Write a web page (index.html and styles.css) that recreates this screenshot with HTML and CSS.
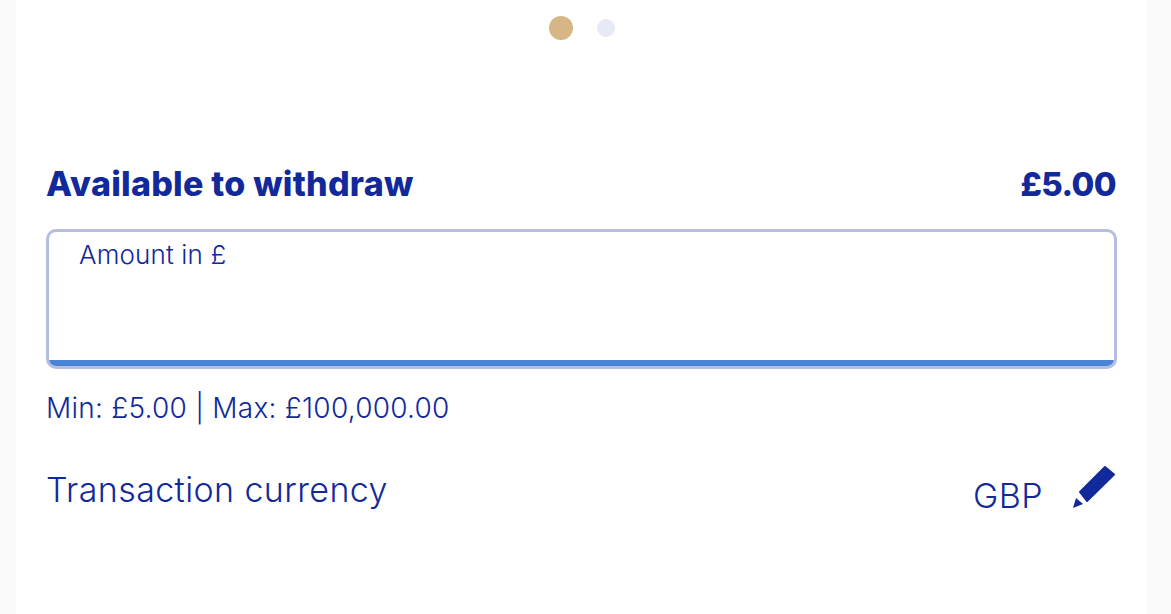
FILE: index.html
```html
<!DOCTYPE html>
<html>
<head>
  <link rel="stylesheet" href="styles.css">
</head>
<body>
  <div class="panel">
    <div class="dots">
      <span class="dot dot-active"></span>
      <span class="dot"></span>
    </div>

    <div class="available">
      <span>Available to withdraw</span>
      <span class="available-sum">£5.00</span>
    </div>

    <div class="amount-box">
      <label class="amount-label">Amount in £</label>
      <div class="amount-bar"></div>
    </div>

    <p class="limits">Min: £5.00 | Max: £100,000.00</p>

    <div class="currency">
      <span class="currency-title">Transaction currency</span>
      <div class="currency-value">
        <span class="currency-code">GBP</span>
        <svg class="edit-icon" width="44" height="44" viewBox="0 0 44 44">
          <polygon class="edit-body" points="33,2 42,9.500 15,36 8,27"/>
          <polygon points="1,43 4,33 11,39"/>
        </svg>
      </div>
    </div>
  </div>
</body>
</html>
```

FILE: styles.css
```css
body {
  margin: 0;
  padding: 0 24px 0 16px;
  height: 614px;
  overflow: hidden;
  box-sizing: border-box;
  background-color: #fafafa;
  font-family: "Inter", "Noto Sans", sans-serif;
  color: #12299b;
}

.panel {
  height: 614px;
  box-sizing: border-box;
  padding: 16px 31px 0 30px;
  background: white;
}

.dots {
  display: flex;
  justify-content: center;
  align-items: center;
  gap: 24px;
  height: 24px;
  padding-left: 2px;
}

.dot {
  width: 18px;
  height: 18px;
  border-radius: 50%;
  background: #e7e9f6;
}

.dot-active {
  width: 24px;
  height: 24px;
  background: #d6b685;
}

.available {
  display: flex;
  justify-content: space-between;
  margin-top: 123px;
  height: 44px;
  line-height: 42px;
  font-size: 34px;
  font-weight: 800;
  letter-spacing: 0.25px;
}

.available-sum {
  font-size: 33px;
  letter-spacing: -0.6px;
}

.amount-box {
  position: relative;
  box-sizing: border-box;
  height: 140px;
  margin: 22px -1px 0 0;
  padding: 9px 30px 0;
  border: 3px solid #b5bedd;
  border-radius: 10px;
  overflow: hidden;
}

.amount-label {
  display: block;
  font-size: 26px;
  font-weight: 300;
  line-height: 28px;
  letter-spacing: 0.15px;
}

.amount-bar {
  position: absolute;
  left: 0;
  right: 0;
  bottom: 0;
  height: 6px;
  background: #4a84d6;
}

.limits {
  margin: 22px 0 0;
  font-size: 28px;
  font-weight: 300;
  line-height: 34px;
  letter-spacing: 0.25px;
}

.currency {
  display: flex;
  justify-content: space-between;
  margin-top: 40px;
}

.currency-title {
  margin-top: 3px;
  font-size: 34px;
  font-weight: 300;
  line-height: 44px;
  letter-spacing: 0.4px;
}

.currency-value {
  display: flex;
  align-items: flex-start;
  gap: 29px;
}

.currency-code {
  margin-top: 9px;
  font-size: 34px;
  font-weight: 300;
  line-height: 44px;
  letter-spacing: 0.4px;
}

.edit-icon {
  display: block;
  fill: #12299b;
  overflow: visible;
}

.edit-body {
  stroke: #12299b;
  stroke-width: 2;
  stroke-linejoin: round;
}
```
